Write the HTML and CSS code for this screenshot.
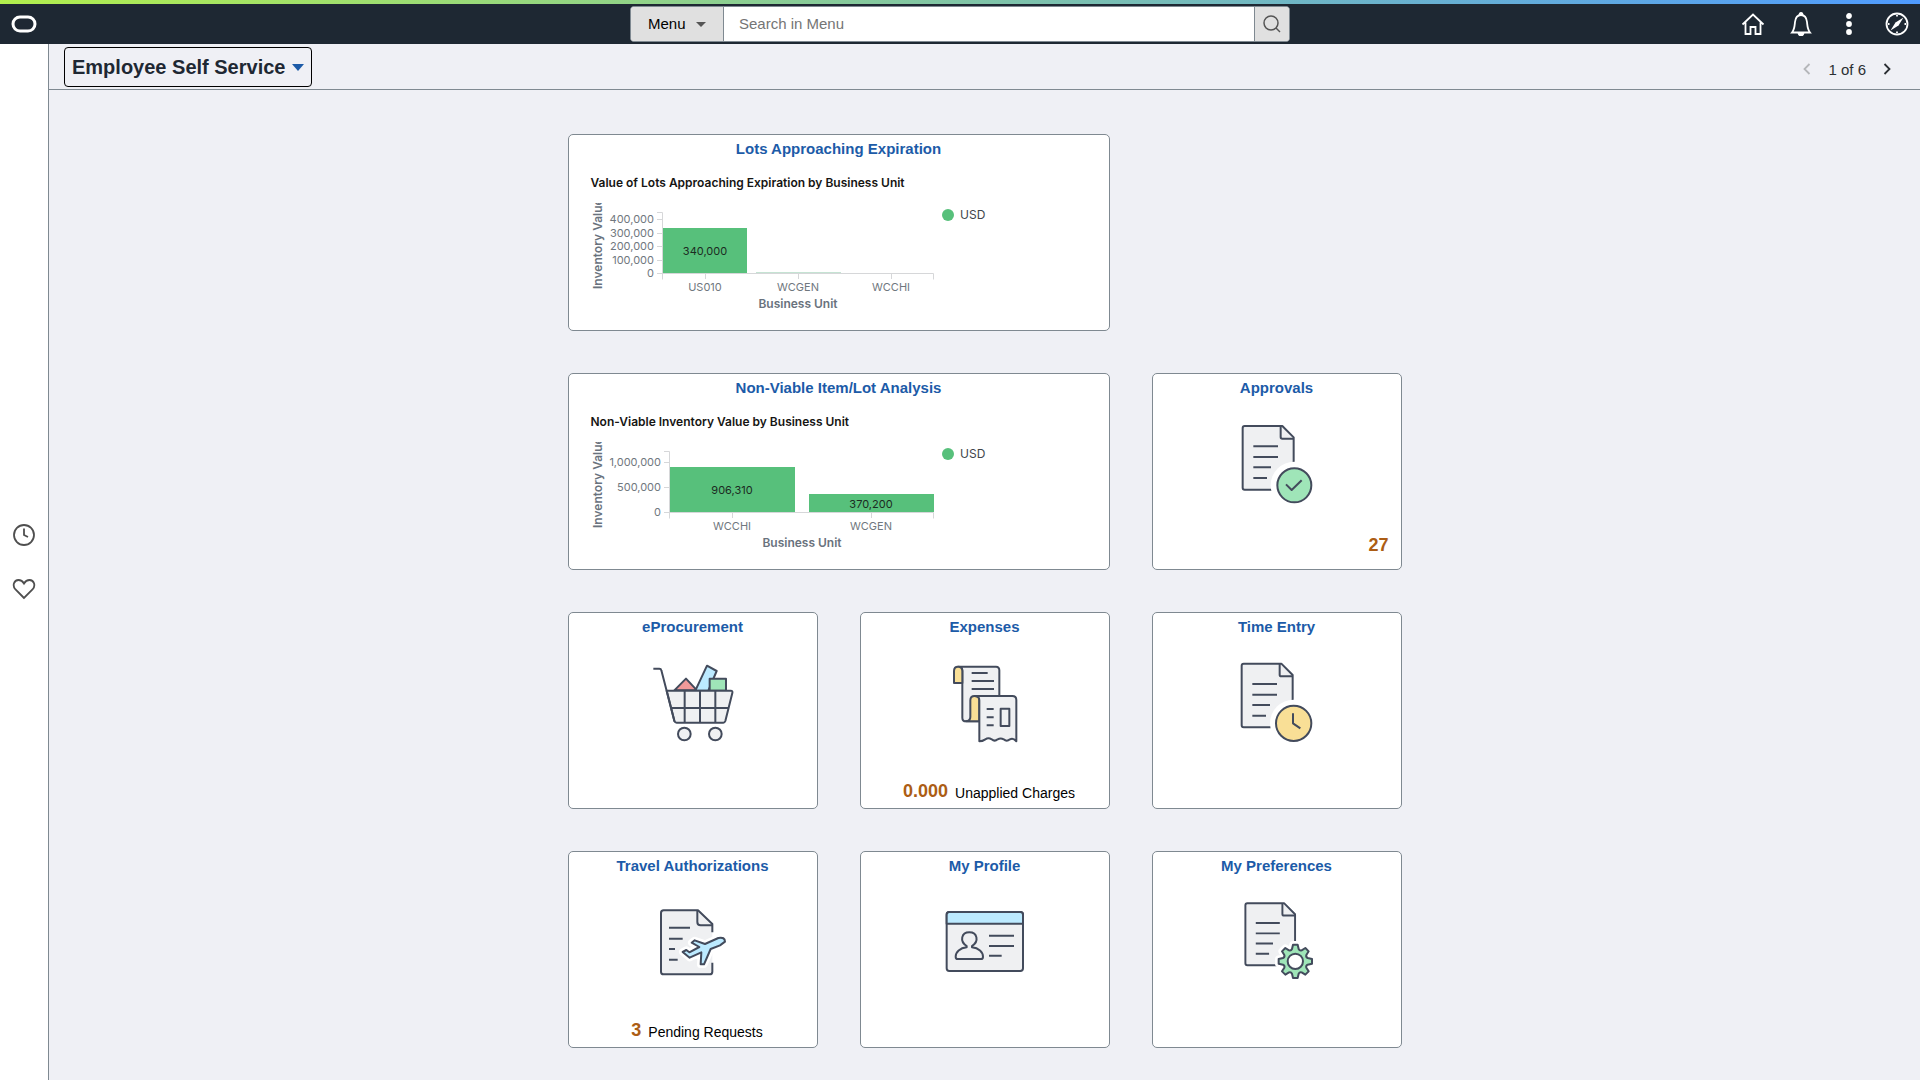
FILE: index.html
```html
<!DOCTYPE html>
<html lang="en">
<head>
  <meta charset="UTF-8" />
  <meta name="viewport" content="width=device-width, initial-scale=1.0" />
  <title>Employee Self Service</title>
  <link rel="stylesheet" href="styles.css">
</head>
<body>

  <!-- shared document shape -->
  <svg class="defs" aria-hidden="true">
    <symbol id="doc" viewBox="0 0 270 270">
      <path class="fill-grey" d="M38 18H151L185 52V203Q185 209 179 209H38Q32 209 32 203V24Q32 18 38 18Z" />
      <path d="M146 18V51Q146 56 151 56H185" />
      <path d="M64 79H138M64 111H138M64 142H117M64 174H105" />
    </symbol>
  </svg>

  <!-- top bar -->
  <header class="topbar">
    <a href="#" class="logo" aria-label="Home page">
      <svg width="26" height="18" viewBox="0 0 26 18"><rect x="2" y="2" width="22" height="14" rx="7" /></svg>
    </a>
    <form class="search">
      <label class="search-scope">
        <select aria-label="Search scope"><option>Menu</option></select>
      </label>
      <input class="search-input" type="text" placeholder="Search in Menu" aria-label="Search in Menu" />
      <button class="search-button" type="button" aria-label="Search">
        <svg width="20" height="20" viewBox="0 0 20 20"><circle cx="9" cy="9" r="7" /><path d="M14 14l4 4" /></svg>
      </button>
    </form>
    <nav class="actions">
      <button class="icon-button" aria-label="Home">
        <svg width="24" height="24" viewBox="0 0 24 24"><path d="M1.5 12.5L12 2.500L22.500 12.500M4.500 10.500V22H9.500V15H14.500V22H19.500V10.500" /></svg>
      </button>
      <button class="icon-button" aria-label="Notifications">
        <svg width="24" height="24" viewBox="0 0 24 24"><path d="M3 20.500C5.500 17.500 5.500 15 6 10C6.500 5.500 8.500 3 12 3S17.500 5.500 18 10C18.500 15 18.500 17.500 21 20.500Z" /><path class="solid" d="M9.500 21H14.500Q14 23.500 12 23.500T9.500 21ZM10.500 3Q10.500 1 12 1T13.500 3Z" /></svg>
      </button>
      <button class="icon-button" aria-label="Actions">
        <svg width="24" height="24" viewBox="0 0 24 24"><g class="solid"><circle cx="12" cy="4" r="2" /><circle cx="12" cy="12" r="2" /><circle cx="12" cy="20" r="2" /></g></svg>
      </button>
      <button class="icon-button" aria-label="NavBar">
        <svg width="24" height="24" viewBox="0 0 24 24"><circle cx="12" cy="12" r="10.500" /><path class="solid thin" d="M18.500 5.500L13.500 13.500L5.500 18.500L10.500 10.500Z" /><path d="M12 3V4.500M12 19.500V21M3 12H4.500M19.500 12H21" /></svg>
      </button>
    </nav>
  </header>

  <div class="page">
    <aside class="rail">
      <button class="icon-button" aria-label="Recently visited">
        <svg width="24" height="24" viewBox="0 0 24 24"><circle cx="12" cy="12" r="10" /><path d="M12 5.500V12L16 14" /></svg>
      </button>
      <button class="icon-button" aria-label="Favorites">
        <svg width="24" height="24" viewBox="0 0 24 24"><path d="M12 21L3.500 12.500C0 8.500 2 3 6.500 3Q10 3 12 6.500Q14 3 17.500 3C22 3 24 8.500 20.500 12.500Z" /></svg>
      </button>
    </aside>

    <div class="content">
      <div class="subheader">
        <button class="page-title" aria-haspopup="true">Employee Self Service <span class="caret"></span></button>
        <div class="pager">
          <button class="icon-button" aria-label="Previous page" disabled>
            <svg width="24" height="24" viewBox="0 0 24 24"><path d="M14.500 7L9.500 12L14.500 17" /></svg>
          </button>
          <span>1 of 6</span>
          <button class="icon-button" aria-label="Next page">
            <svg width="24" height="24" viewBox="0 0 24 24"><path d="M9.500 7L14.500 12L9.500 17" /></svg>
          </button>
        </div>
      </div>

      <main class="tiles">
        <section class="tile tile-wide">
          <h2><a href="#">Lots Approaching Expiration</a></h2>
          <h3>Value of Lots Approaching Expiration by Business Unit</h3>
          <svg class="chart" viewBox="0 0 540 120">
            <text class="axis-title" transform="translate(33 86) rotate(-90)">Inventory Value</text>
            <g class="end">
              <text x="85" y="20">400,000</text>
              <text x="85" y="34">300,000</text>
              <text x="85" y="47">200,000</text>
              <text x="85" y="61">100,000</text>
              <text x="85" y="74">0</text>
            </g>
            <rect class="bar" x="94" y="25" width="84" height="45" />
            <rect class="bar faint" x="187" y="69" width="85" height="1" />
            <path class="axis" d="M88 9.500H93.500V76.500M88 16.500H93M88 30.500H93M88 43.500H93M88 57.500H93M88 70.500H364.500V76.500M136.500 71V76M229.500 71V76M322.500 71V76" />
            <g class="middle">
              <text class="value" x="136" y="52">340,000</text>
              <text x="136" y="88">US010</text>
              <text x="229" y="88">WCGEN</text>
              <text x="322" y="88">WCCHI</text>
              <text class="axis-title" x="229" y="105">Business Unit</text>
            </g>
            <circle class="bar" cx="379" cy="12" r="6" />
            <text class="legend" x="391" y="16">USD</text>
          </svg>
        </section>

        <section class="tile tile-wide tile-row-start">
          <h2><a href="#">Non-Viable Item/Lot Analysis</a></h2>
          <h3>Non-Viable Inventory Value by Business Unit</h3>
          <svg class="chart" viewBox="0 0 540 120">
            <text class="axis-title" transform="translate(33 86) rotate(-90)">Inventory Value</text>
            <g class="end">
              <text x="92" y="24">1,000,000</text>
              <text x="92" y="49">500,000</text>
              <text x="92" y="74">0</text>
            </g>
            <rect class="bar" x="101" y="25" width="125" height="45" />
            <rect class="bar" x="240" y="52" width="125" height="18" />
            <path class="axis" d="M95 9.500H100.500V76.500M95 20.500H100M95 45.500H100M95 70.500H364.500V76.500M163.500 71V76M302.500 71V76" />
            <g class="middle">
              <text class="value" x="163" y="52">906,310</text>
              <text class="value" x="302" y="66">370,200</text>
              <text x="163" y="88">WCCHI</text>
              <text x="302" y="88">WCGEN</text>
              <text class="axis-title" x="233" y="105">Business Unit</text>
            </g>
            <circle class="bar" cx="379" cy="12" r="6" />
            <text class="legend" x="391" y="16">USD</text>
          </svg>
        </section>

        <section class="tile">
          <h2><a href="#">Approvals</a></h2>
          <svg class="art" viewBox="0 0 270 270">
            <use href="#doc" width="270" height="270" />
            <circle class="halo" cx="187" cy="196" r="71" />
            <circle class="fill-green" cx="187" cy="196" r="51" />
            <path d="M162 193L179 210L209 181" />
          </svg>
          <p class="tile-foot tile-foot-end"><strong>27</strong></p>
        </section>

        <section class="tile">
          <h2><a href="#">eProcurement</a></h2>
          <svg class="art" viewBox="0 0 270 270">
            <path class="fill-red" d="M79 94L114 59L147 94Z" />
            <path class="fill-blue" d="M142 95L177 20L206 36L181 95Z" />
            <path class="fill-green" d="M185 59H234V95H185Z" />
            <path class="fill-grey" d="M56 95H248Q255 95 253 102L232 186Q230 191 226 191H86Q81 191 79 186Z" />
            <path d="M16 29H34Q39 29 40 34L80 188M110 95V191M156 95V191M202 95V191M69 147H243" />
            <circle class="fill-grey" cx="109" cy="225" r="19" />
            <circle class="fill-grey" cx="202" cy="225" r="19" />
          </svg>
        </section>

        <section class="tile">
          <h2><a href="#">Expenses</a></h2>
          <svg class="art" viewBox="0 0 270 270">
            <path class="fill-grey" d="M54 23H168Q178 23 178 34V187H78Q67 187 67 176V34Q67 23 54 23Z" />
            <path class="fill-yellow" d="M42 72V36Q42 23 54 23Q67 23 67 36V72Z" />
            <path class="fill-yellow" d="M78 187Q91 186 91 174V124Q91 111 104 111Q118 111 118 124V187Z" />
            <path class="fill-grey" d="M104 111H217Q229 111 229 123V247Q219 235 210 241Q200 249 191 241Q182 236 173 241Q164 249 155 241Q145 235 136 241Q127 247 118 247V124Q118 111 104 111Z" />
            <path d="M95 42H143M95 66H162M95 90H162M140 150H161M140 175H161M140 199H161" />
            <path d="M182 149H208V201H182Z" />
          </svg>
          <p class="tile-foot"><strong>0.000</strong> <span>Unapplied Charges</span></p>
        </section>

        <section class="tile">
          <h2><a href="#">Time Entry</a></h2>
          <svg class="art" viewBox="0 0 270 270">
            <use href="#doc" x="-3" y="-4" width="270" height="270" />
            <circle class="halo" cx="185" cy="193" r="71" />
            <circle class="fill-yellow" cx="185" cy="193" r="53" />
            <path d="M183 163V193L205 208" />
          </svg>
        </section>

        <section class="tile">
          <h2><a href="#">Travel Authorizations</a></h2>
          <svg class="art" viewBox="0 0 270 270">
            <path class="fill-grey no-line" d="M39 37H150L193 76V229H39Z" />
            <path d="M193 103V78L150 37H47Q39 37 39 45V221Q39 229 47 229H185Q193 229 193 221V194" />
            <path d="M148 37V72Q148 82 158 82H193M63 89H126M63 122H104M63 153H81M63 185H89" />
            <path class="halo-line" d="M231 131Q231 116 211 120L171 138L140 127L131 134L154 147L124 163L115 156L104 162L125 179L160 163L158 199H168L188 153L216 142Z" />
            <path class="fill-blue" d="M231 131Q231 116 211 120L171 138L140 127L131 134L154 147L124 163L115 156L104 162L125 179L160 163L158 199H168L188 153L216 142Z" />
          </svg>
          <p class="tile-foot"><strong>3</strong> <span>Pending Requests</span></p>
        </section>

        <section class="tile">
          <h2><a href="#">My Profile</a></h2>
          <svg class="art" viewBox="0 0 270 270">
            <rect class="fill-grey" x="20" y="42" width="229" height="177" rx="8" />
            <path class="fill-blue" d="M20 77V50Q20 42 28 42H241Q249 42 249 50V77Z" />
            <path d="M80 148V144C58 130 64 103 88 103S118 130 96 144V148C116 150 129 162 129 176Q129 183 123 183H53Q47 183 47 176C47 162 60 150 80 148Z" />
            <path d="M147 113H222M147 144H222M147 173H185" />
          </svg>
        </section>

        <section class="tile">
          <h2><a href="#">My Preferences</a></h2>
          <svg class="art" viewBox="0 0 270 270">
            <use href="#doc" x="9" y="-2" width="263" height="263" />
            <g transform="translate(190 190)">
              <path class="halo-line" d="M-10 -37L-7 -50H7L10 -37Q13 -31 19 -33L30 -40L40 -30L33 -19Q31 -13 37 -10L50 -7V7L37 10Q31 13 33 19L40 30L30 40L19 33Q13 31 10 37L7 50H-7L-10 37Q-13 31 -19 33L-30 40L-40 30L-33 19Q-31 13 -37 10L-50 7V-7L-37 -10Q-31 -13 -33 -19L-40 -30L-30 -40L-19 -33Q-13 -31 -10 -37Z" />
              <path class="fill-green" d="M-10 -37L-7 -50H7L10 -37Q13 -31 19 -33L30 -40L40 -30L33 -19Q31 -13 37 -10L50 -7V7L37 10Q31 13 33 19L40 30L30 40L19 33Q13 31 10 37L7 50H-7L-10 37Q-13 31 -19 33L-30 40L-40 30L-33 19Q-31 13 -37 10L-50 7V-7L-37 -10Q-31 -13 -33 -19L-40 -30L-30 -40L-19 -33Q-13 -31 -10 -37Z" />
              <circle class="fill-white" r="23" />
            </g>
          </svg>
        </section>
      </main>
    </div>
  </div>

</body>
</html>
```

FILE: styles.css
```css
:root {
  --dark: #1e2833;
  --bg: #eff0f5;
  --line: #7f8991;
  --link: #1c5ba8;
  --amber: #ac5d14;
  --green: #57c07b;
}

* { box-sizing: border-box; }

body {
  margin: 0;
  min-height: 100vh;
  display: flex;
  flex-direction: column;
  font-family: "Liberation Sans", Arial, sans-serif;
  font-size: 15px;
  color: #161513;
  background: var(--bg);
}

button {
  font: inherit;
  color: inherit;
  background: none;
  border: 0;
  padding: 0;
}

svg {
  display: block;
  fill: none;
  stroke: currentColor;
}
.defs {
  position: absolute;
  width: 0;
  height: 0;
}
.solid { fill: currentColor; }
.thin { stroke-width: 0; }

.icon-button {
  width: 24px;
  height: 24px;
}
.icon-button svg { stroke-width: 1.8; }

/* top bar */
.topbar {
  height: 44px;
  padding: 0 11px;
  display: grid;
  grid-template-columns: 1fr minmax(0, 660px) 1fr;
  align-items: center;
  color: white;
  background: var(--dark);
  border-top: 4px solid;
  border-image: linear-gradient(to right, #b2ef4d, #4f9bff) 1;
}
.logo { color: white; }
.logo svg { stroke-width: 3; }
.search {
  height: 36px;
  display: flex;
  border: 1px solid var(--line);
  border-radius: 4px;
  overflow: hidden;
  background: white;
}
.search-scope {
  width: 93px;
  display: flex;
  align-items: center;
  gap: 10px;
  padding-left: 17px;
  background: #e0e0e0;
  border-right: 1px solid var(--line);
}
.search-scope select {
  font: inherit;
  color: black;
  appearance: none;
  background: none;
  border: 0;
  padding: 0 0 2px;
}
.search-scope::after {
  content: "";
  border: 5px solid transparent;
  border-top-color: #555;
  border-bottom: 0;
}
.search-input {
  flex: 1;
  min-width: 0;
  font: inherit;
  border: 0;
  padding: 0 15px 2px;
}
.search-input::placeholder { color: #757575; }
.search-button {
  width: 35px;
  color: #555;
  background: #e0e0e0;
  border-left: 1px solid var(--line);
}
.search-button svg {
  margin: 0 auto;
  stroke-width: 1.5;
}
.actions {
  display: flex;
  justify-content: flex-end;
  gap: 24px;
}

/* page frame */
.page {
  flex: 1;
  display: flex;
}
.rail {
  width: 49px;
  display: flex;
  flex-direction: column;
  align-items: center;
  justify-content: center;
  gap: 30px;
  color: #4f4f4f;
  background: white;
  border-right: 1px solid var(--line);
}
.content {
  flex: 1;
  min-width: 0;
}
.subheader {
  display: flex;
  justify-content: space-between;
  align-items: flex-end;
  padding: 3px 21px 2px 15px;
  border-bottom: 1px solid var(--line);
}
.page-title {
  height: 40px;
  display: flex;
  align-items: center;
  gap: 7px;
  padding: 0 7px;
  font-size: 20px;
  font-weight: bold;
  color: var(--dark);
  border: 1px solid black;
  border-radius: 4px;
}
.caret {
  border: 6px solid transparent;
  border-top: 7px solid var(--link);
  border-bottom: 0;
}
.pager {
  display: flex;
  align-items: center;
  gap: 9px;
  padding-bottom: 6px;
  color: #2b2f33;
}
.pager .icon-button:disabled { color: #b5b7ba; }

/* tiles */
.tiles {
  display: grid;
  grid-template-columns: repeat(3, 250px);
  grid-auto-rows: minmax(197px, auto);
  gap: 42px;
  justify-content: center;
  padding: 44px 0 32px;
}
.tile {
  display: flex;
  flex-direction: column;
  background: white;
  border: 1px solid var(--line);
  border-radius: 5px;
}
.tile-wide { grid-column: span 2; }
.tile-row-start { grid-column: 1 / span 2; }
.tile h2 {
  margin: 5px 0 0;
  font-size: 15px;
  line-height: 18px;
  text-align: center;
}
.tile h2 a {
  color: var(--link);
  text-decoration: none;
}
.tile-foot {
  margin: auto 0 3px;
  padding-left: 9px;
  display: flex;
  justify-content: center;
  gap: 7px;
  font-size: 14px;
  line-height: 24px;
  color: black;
}
.tile-foot strong {
  font-size: 18px;
  line-height: 20px;
  color: var(--amber);
}
.tile-foot-end {
  justify-content: flex-end;
  margin-bottom: 14px;
  padding-right: 12px;
}

/* tile pictures */
.art {
  width: 90px;
  height: 90px;
  margin: 23px auto 0;
  color: #434b5c;
  stroke-width: 6;
  stroke-linejoin: round;
}
.fill-grey { fill: #eff0f2; }
.fill-green { fill: #9fe5b8; }
.fill-yellow { fill: #f9df96; }
.fill-blue { fill: #bceaff; }
.fill-red { fill: #f19999; }
.fill-white { fill: white; }
.no-line { stroke: none; }
.halo {
  fill: white;
  stroke: none;
}
.halo-line {
  fill: white;
  stroke: white;
  stroke-width: 22;
}

/* charts */
.tile h3 {
  margin: 16px 22px 0;
  font: 600 12px/18px Inter, sans-serif;
}
.chart {
  width: 100%;
  margin-top: 11px;
  overflow: hidden;
}
.chart text {
  font: 11px Inter, sans-serif;
  fill: #70777e;
  stroke: none;
}
.chart .axis-title {
  font-size: 12px;
  font-weight: 600;
  fill: #69727d;
}
.chart .value { fill: #1c2b22; }
.chart .legend {
  font-size: 12px;
  fill: #41464b;
}
.end { text-anchor: end; }
.middle { text-anchor: middle; }
.bar {
  fill: var(--green);
  stroke: none;
}
.faint { fill: #c5e3d3; }
.axis { stroke: #d6d7d9; }
```
